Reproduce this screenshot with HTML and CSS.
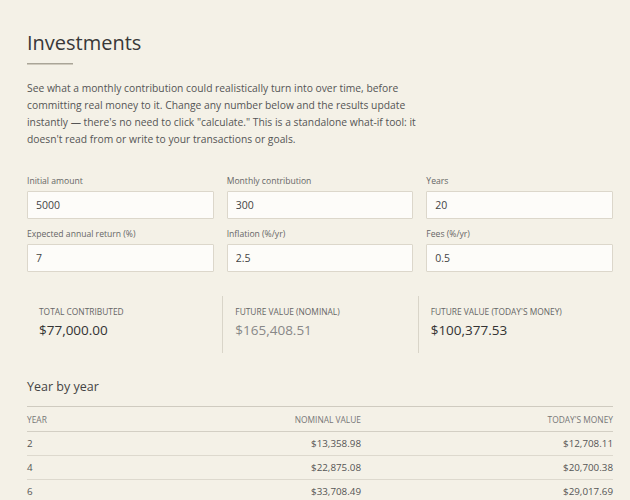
FILE: index.html
```html
<!DOCTYPE html>
<html lang="en">
<head>
<meta charset="utf-8">
<title>Investments</title>
<link rel="stylesheet" href="styles.css">
</head>
<body>
<main class="page">
  <h1 class="title">Investments</h1>
  <div class="title-rule"></div>
  <p class="intro">See what a monthly contribution could realistically turn into over time, before committing real money to it. Change any number below and the results update instantly — there's no need to click "calculate." This is a standalone what-if tool: it doesn't read from or write to your transactions or goals.</p>

  <div class="fields">
    <label class="field"><span class="field-label">Initial amount</span><input class="field-input" value="5000"></label>
    <label class="field"><span class="field-label">Monthly contribution</span><input class="field-input" value="300"></label>
    <label class="field"><span class="field-label">Years</span><input class="field-input" value="20"></label>
    <label class="field"><span class="field-label">Expected annual return (%)</span><input class="field-input" value="7"></label>
    <label class="field"><span class="field-label">Inflation (%/yr)</span><input class="field-input" value="2.5"></label>
    <label class="field"><span class="field-label">Fees (%/yr)</span><input class="field-input" value="0.5"></label>
  </div>

  <section class="stats">
    <div class="stat">
      <div class="stat-label">Total contributed</div>
      <div class="stat-value">$77,000.00</div>
    </div>
    <div class="stat">
      <div class="stat-label">Future value (nominal)</div>
      <div class="stat-value muted">$165,408.51</div>
    </div>
    <div class="stat">
      <div class="stat-label">Future value (today's money)</div>
      <div class="stat-value">$100,377.53</div>
    </div>
  </section>

  <h2 class="section-title">Year by year</h2>
  <div class="table">
    <div class="row head">
      <div class="cell">Year</div>
      <div class="cell num">Nominal value</div>
      <div class="cell num">Today's money</div>
    </div>
    <div class="row">
      <div class="cell">2</div>
      <div class="cell num">$13,358.98</div>
      <div class="cell num">$12,708.11</div>
    </div>
    <div class="row">
      <div class="cell">4</div>
      <div class="cell num">$22,875.08</div>
      <div class="cell num">$20,700.38</div>
    </div>
    <div class="row last">
      <div class="cell">6</div>
      <div class="cell num">$33,708.49</div>
      <div class="cell num">$29,017.69</div>
    </div>
  </div>
</main>
</body>
</html>
```

FILE: styles.css
```css
html, body {
  margin: 0;
  padding: 0;
  background: #f4f1e7;
}
body {
  font-family: "Open Sans", "Noto Sans", sans-serif;
  color: #3a3a3a;
  overflow: hidden;
  height: 500px;
}
.page {
  padding: 30px 17px 0 27px;
}
.title {
  margin: 0;
  font-size: 20px;
  line-height: 26px;
  font-weight: 400;
  color: #383838;
}
.title-rule {
  width: 46px;
  height: 0;
  border-top: 1px solid #a9a598;
  border-bottom: 1px solid #cfcabd;
  margin-top: 7px;
}
.intro {
  margin: 15px 0 0;
  max-width: 390px;
  font-size: 10.3px;
  line-height: 17px;
  color: #555;
}
.fields {
  display: grid;
  grid-template-columns: repeat(3, 1fr);
  column-gap: 13px;
  row-gap: 9px;
  margin-top: 27px;
}
.field {
  display: flex;
  flex-direction: column;
  gap: 4px;
}
.field-label {
  font-size: 8.6px;
  line-height: 12px;
  color: #666;
}
.field-input {
  box-sizing: border-box;
  height: 28px;
  border: 1px solid #dcd7cb;
  background: #fdfcf9;
  border-radius: 1px;
  padding: 0 8px;
  font-family: inherit;
  font-size: 10.5px;
  color: #444;
  outline: none;
}
.stats {
  display: grid;
  grid-template-columns: repeat(3, 1fr);
  margin-top: 24px;
}
.stat {
  padding: 10px 12px 16px;
  height: 31px;
}
.stat + .stat {
  border-left: 1px solid #d9d5c9;
}
.stat-label {
  font-size: 8.4px;
  line-height: 12px;
  text-transform: uppercase;
  color: #666;
}
.stat-value {
  font-size: 13.5px;
  line-height: 20px;
  margin-top: 2px;
  color: #333;
}
.stat-value.muted {
  color: #888;
}
.section-title {
  margin: 25px 0 0;
  font-size: 12.5px;
  line-height: 18px;
  font-weight: 400;
  color: #444;
}
.table {
  margin-top: 10px;
  border-top: 1px solid #cfcbc0;
}
.row {
  display: grid;
  grid-template-columns: 200px 134px 1fr;
  border-bottom: 1px solid #ddd9ce;
  height: 23px;
  align-items: center;
}
.row.head {
  height: 24px;
  border-bottom-color: #d3cfc4;
}
.row.last {
  border-bottom: none;
}
.cell {
  font-size: 9.8px;
  color: #555;
}
.head .cell {
  font-size: 8.4px;
  text-transform: uppercase;
  color: #777;
}
.num {
  text-align: right;
}
```
